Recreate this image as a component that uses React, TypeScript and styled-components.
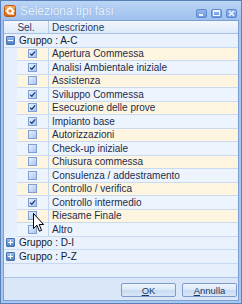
import React from 'react';
import styled, {createGlobalStyle} from 'styled-components';

const GlobalStyle = createGlobalStyle`
    html, body {
        margin: 0;
        padding: 0;
        background: #ffffff;
    }
    body {
        font-family: "Liberation Sans Narrow", "Liberation Sans", Arial, sans-serif;
    }
`

type Phase = { name: string; checked: boolean };

const phases: Phase[] = [
    {name: 'Apertura Commessa', checked: true},
    {name: 'Analisi Ambientale iniziale', checked: true},
    {name: 'Assistenza', checked: false},
    {name: 'Sviluppo Commessa', checked: true},
    {name: 'Esecuzione delle prove', checked: true},
    {name: 'Impianto base', checked: true},
    {name: 'Autorizzazioni', checked: false},
    {name: 'Check-up iniziale', checked: false},
    {name: 'Chiusura commessa', checked: false},
    {name: 'Consulenza / addestramento', checked: false},
    {name: 'Controllo / verifica', checked: false},
    {name: 'Controllo intermedio', checked: true},
    {name: 'Riesame Finale', checked: false},
    {name: 'Altro', checked: false},
];

const AppIcon = () => (
    <svg width="12" height="12" viewBox="0 0 12 12">
        <defs>
            <linearGradient id="ico" x1="0" y1="0" x2="0" y2="1">
                <stop offset="0" stopColor="#f9b25a"/>
                <stop offset="1" stopColor="#d8620e"/>
            </linearGradient>
        </defs>
        <rect x="0.5" y="0.5" width="11" height="11" rx="2" fill="url(#ico)" stroke="#c1570c"/>
        <circle cx="6" cy="6" r="2.6" fill="none" stroke="#fff" strokeWidth="1.8"/>
        <rect x="5.2" y="1.6" width="1.6" height="1.6" fill="#fff"/>
        <rect x="1.6" y="5.2" width="1.6" height="1.6" fill="#fff"/>
        <rect x="8.8" y="5.2" width="1.6" height="1.6" fill="#fff"/>
        <rect x="7.6" y="7.6" width="2.2" height="2.2" fill="#fff"/>
    </svg>
);

const Cursor = () => (
    <svg width="12" height="20" viewBox="0 0 12 20">
        <path d="M0.5 0.5 L0.5 15.5 L4 12.2 L6.4 18.2 L8.6 17.3 L6.2 11.5 L10.6 11.5 Z"
              fill="#fff" stroke="#000" strokeWidth="1" strokeLinejoin="miter"/>
    </svg>
);

const CheckBox = ({checked}: { checked: boolean }) => (
    <StyledCheck>
        {checked && (
            <svg width="7" height="7" viewBox="0 0 7 7">
                <path d="M1 3.6 L2.8 5.3 L6.2 1.4" fill="none" stroke="#1f3f80" strokeWidth="1.3"/>
            </svg>
        )}
    </StyledCheck>
);

const GroupRow = ({label, open}: { label: string; open?: boolean }) => (
    <StyledGroup>
        <Expander>
            <svg width="5" height="5" viewBox="0 0 5 5">
                <rect x="0" y="2" width="5" height="1" fill="#fff"/>
                {!open && <rect x="2" y="0" width="1" height="5" fill="#fff"/>}
            </svg>
        </Expander>
        <span>{label}</span>
    </StyledGroup>
);

export default function App() {
    return (
        <>
            <GlobalStyle/>
            <Window>
                <TitleBar>
                    <AppIcon/>
                    <Title>Seleziona tipi fasi</Title>
                    <Controls>
                        <CtrlButton>
                            <svg width="9" height="7" viewBox="0 0 9 7">
                                <rect x="2" y="4" width="4" height="2" fill="#eef4fd"/>
                            </svg>
                        </CtrlButton>
                        <CtrlButton>
                            <svg width="9" height="7" viewBox="0 0 9 7">
                                <rect x="1.5" y="0.5" width="6" height="5" fill="none" stroke="#eef4fd"/>
                                <rect x="1.5" y="0.5" width="6" height="1.5" fill="#eef4fd"/>
                            </svg>
                        </CtrlButton>
                        <CtrlButton>
                            <svg width="9" height="7" viewBox="0 0 9 7">
                                <path d="M2 1 L7 6 M7 1 L2 6" stroke="#eef4fd" strokeWidth="1.6"/>
                            </svg>
                        </CtrlButton>
                    </Controls>
                </TitleBar>
                <Body>
                    <Grid>
                        <HeaderRow>
                            <HeaderCell center>Sel.</HeaderCell>
                            <HeaderCell>Descrizione</HeaderCell>
                        </HeaderRow>
                        <GroupRow label="Gruppo : A-C" open/>
                        {phases.map((p, i) => (
                            <DataRow key={p.name}>
                                <Indent/>
                                <SelCell odd={i % 2 === 1}>
                                    <CheckBox checked={p.checked}/>
                                </SelCell>
                                <DescCell odd={i % 2 === 1}>{p.name}</DescCell>
                            </DataRow>
                        ))}
                        <GroupRow label="Gruppo : D-I"/>
                        <GroupRow label="Gruppo : P-Z"/>
                    </Grid>
                    <Footer>
                        <DialogButton><u>O</u>K</DialogButton>
                        <DialogButton><u>A</u>nnulla</DialogButton>
                    </Footer>
                </Body>
                <CursorLayer>
                    <Cursor/>
                </CursorLayer>
            </Window>
        </>
    );
}

const Window = styled.div`
    position: relative;
    width: 242px;
    height: 304px;
    box-sizing: border-box;
    border: 1px solid #5b80b8;
    padding: 0 2px 2px;
    background: linear-gradient(#bad5f6, #9fc1ee 19px, #a8c7f0 40px, #a8c7f0);
    display: flex;
    flex-direction: column;
    overflow: hidden;
`

const TitleBar = styled.div`
    height: 19px;
    display: flex;
    align-items: center;
    padding-left: 1px;
`

const Title = styled.span`
    margin-left: 4px;
    font-family: "Liberation Sans", Arial, sans-serif;
    font-size: 12px;
    color: #e9f1fc;
    text-shadow: 0 0 1px rgba(90, 130, 190, 0.5);
`

const Controls = styled.div`
    margin-left: auto;
    margin-right: 2px;
    align-self: flex-start;
    margin-top: 8px;
    display: flex;
    gap: 4px;
`

const CtrlButton = styled.div`
    width: 11px;
    height: 9px;
    box-sizing: border-box;
    border: 1px solid #5f89cb;
    border-radius: 2px;
    background: linear-gradient(#93b7ec, #6e9ade);
    display: flex;
    align-items: center;
    justify-content: center;
`

const Body = styled.div`
    flex: 1;
    display: flex;
    flex-direction: column;
    border: 1px solid #7c9fd3;
    background: #dae7f9;
    min-height: 0;
`

const Grid = styled.div`
    flex: 1;
    background: #e6effc;
    border-bottom: 1px solid #a9c3e7;
    overflow: hidden;
    color: #1d2c4c;
    font-size: 10px;
`

const HeaderRow = styled.div`
    height: 13px;
    box-sizing: border-box;
    display: grid;
    grid-template-columns: 45px 1fr;
    background: linear-gradient(#f3f7fd, #dde9f9);
    border-bottom: 1px solid #a8c2e6;
`

const HeaderCell = styled.div<{ center?: boolean }>`
    display: flex;
    align-items: center;
    justify-content: ${p => (p.center ? 'center' : 'flex-start')};
    padding-left: ${p => (p.center ? '0' : '3px')};
    border-right: ${p => (p.center ? '1px solid #b3cae9' : 'none')};
    color: #1f3a64;
`

const StyledGroup = styled.div`
    height: 13.5px;
    box-sizing: border-box;
    display: flex;
    align-items: center;
    gap: 4px;
    padding-left: 2px;
    background: #e9f1fd;
    border-bottom: 1px solid #c8daf2;
    color: #111a2c;
`

const Expander = styled.div`
    width: 9px;
    height: 9px;
    box-sizing: border-box;
    border: 1px solid #456fae;
    border-radius: 1px;
    background: linear-gradient(#9dbce8, #4f7fc4);
    display: flex;
    align-items: center;
    justify-content: center;
`

const DataRow = styled.div`
    height: 13.5px;
    display: grid;
    grid-template-columns: 13px 32px 1fr;
`

const Indent = styled.div`
    background: #e6effc;
`

const SelCell = styled.div<{ odd: boolean }>`
    background: ${p => (p.odd ? '#eef4fd' : '#fdf5df')};
    border-right: 1px solid #c4d7f0;
    border-bottom: 1px solid #c9daf1;
    display: flex;
    align-items: center;
    justify-content: center;
`

const DescCell = styled.div<{ odd: boolean }>`
    background: ${p => (p.odd ? '#eef4fd' : '#fdf5df')};
    border-bottom: 1px solid #c9daf1;
    padding-left: 3px;
    display: flex;
    align-items: center;
    white-space: nowrap;
    overflow: hidden;
`

const StyledCheck = styled.div`
    width: 9px;
    height: 9px;
    box-sizing: border-box;
    border: 1px solid #7f9fd2;
    background: linear-gradient(135deg, #e9f1fc, #a9c4ec);
    display: flex;
    align-items: center;
    justify-content: center;
`

const Footer = styled.div`
    height: 22px;
    display: flex;
    justify-content: flex-end;
    align-items: center;
    gap: 6px;
    padding: 2px 1px 0 0;
    box-sizing: border-box;
`

const DialogButton = styled.div`
    width: 55px;
    height: 14px;
    box-sizing: border-box;
    border: 1px solid #7c9bcb;
    border-radius: 2px;
    background: linear-gradient(#eef4fd 0%, #dce8f8 50%, #c9dbf3 51%, #d8e6f8 100%);
    color: #1e395b;
    font-size: 9.5px;
    display: flex;
    align-items: center;
    justify-content: center;

    u {
        text-decoration-thickness: 1px;
        text-underline-offset: 1px;
    }
`

const CursorLayer = styled.div`
    position: absolute;
    left: 32px;
    top: 212px;
    width: 12px;
    height: 20px;
    pointer-events: none;
`
